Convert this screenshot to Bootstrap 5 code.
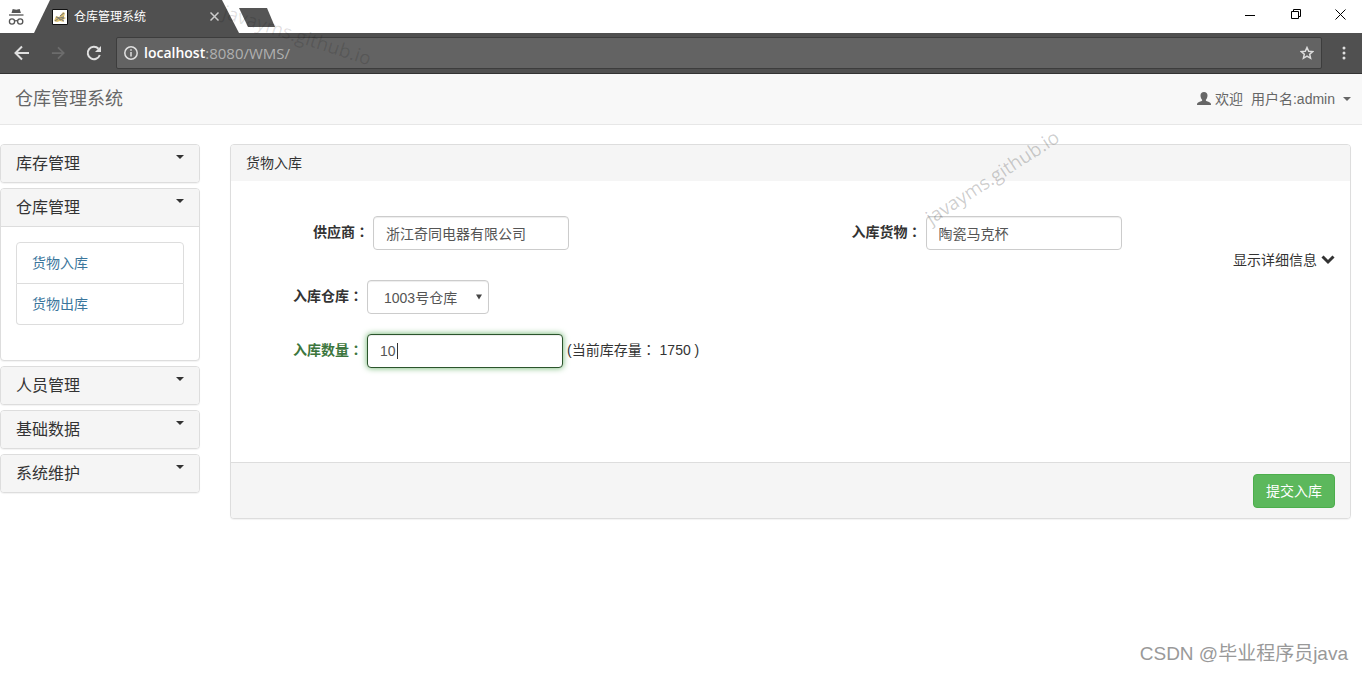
<!DOCTYPE html>
<html lang="zh-CN">
<head>
<meta charset="utf-8">
<meta name="viewport" content="width=device-width, initial-scale=1">
<title>仓库管理系统</title>
<link href="https://cdn.jsdelivr.net/npm/bootstrap@5.3.0/dist/css/bootstrap.min.css" rel="stylesheet">
<style>
body{font:14px/20px "Liberation Sans","Noto Sans CJK SC",sans-serif;color:#333;background:#fff;overflow-x:hidden}
svg{display:block;flex:none}
.colon{font-family:"Noto Sans CJK TC",sans-serif;line-height:1}
/* browser window */
.tabstrip{height:33px;background:#fff}
.chrome-btn{background:none;border:0;padding:0;display:flex;align-items:center;justify-content:center}
.chrome-tab{width:205px;height:33px;background:#505050;color:#fff;font-size:12px;clip-path:polygon(16px 0,188px 0,205px 100%,0 100%);padding:0 20px 0 18px;gap:6px}
.new-tab{width:38px;height:19px;background:#555;clip-path:polygon(0 0,28px 0,36px 100%,9px 100%)}
.win-btn{width:46px;height:28px}
.win-close{width:43px}
.toolbar{height:41px;background:#505050;border-bottom:1px solid #333}
.tools{padding-left:4px;margin-right:4px}
.nav-btn{width:36px;height:36px}
.menu-btn{width:40px;height:36px;padding-left:4px}
.omnibox{height:32px;background:#636363;border:1px solid #3d3d3d;border-radius:2px;padding:0 7px;font:15px/20px "Open Sans","Noto Sans",sans-serif;color:#b0b0b0}
.omnibox input{background:none;border:0;padding:0;outline:0;color:#b0b0b0;min-width:0}
.omnibox label{color:#fff;font-size:14px;font-weight:600;margin-left:6px}
/* application */
.appbar{min-height:51px;background:#f8f8f8;border-bottom:1px solid #e7e7e7;padding:0 11px 0 15px;color:#666}
.appbar a{color:#666;text-decoration:none}
.appbar .brand{font-size:18px}
.caret{width:0;height:0;border-top:4px solid;border-left:4px solid transparent;border-right:4px solid transparent;flex:none}
.page{padding:19px 11px 0 0;gap:30px}
.side{flex:0 0 200px;gap:5px}
.panel{border:1px solid #ddd;border-radius:4px;background:#fff;box-shadow:0 1px 1px rgba(0,0,0,.05);overflow:hidden}
.side-head{background:#f5f5f5;border:0;width:100%;height:37px;padding:0 15px;font-size:16px;color:#333}
.side-head .caret{margin-top:10px}
.side-body{border-top:1px solid #ddd;padding:15px 15px 35px}
.side-body .list-group-item{padding:10px 15px;line-height:20px;color:#3b769c;border-color:#ddd}
.side-body .list-group{--bs-list-group-border-radius:4px}
.main-head{background:#f5f5f5;padding:8px 15px;font-size:14px}
.main-body{padding:35px 15px 94px}
.main-foot{background:#f5f5f5;border-top:1px solid #ddd;padding:11px 15px 10px}
.lbl{font-weight:700;margin:0 4px 3px 0;white-space:nowrap}
.stock{margin:0 0 3px 4px}
.main-body .form-control,.main-body .form-select{height:34px;padding:6px 12px;font-size:14px;line-height:20px;color:#555;border:1px solid #ccc;border-radius:4px;box-shadow:inset 0 1px 1px rgba(0,0,0,.075)}
.main-body .form-control{width:196px}
.main-body .form-select{width:122px;padding:7px 16px 5px;background:#fff url("data:image/svg+xml,%3Csvg xmlns='http://www.w3.org/2000/svg' viewBox='0 0 7 6'%3E%3Cpath d='M0 0h7L3.500 6z' fill='%23444'/%3E%3C/svg%3E") no-repeat right 6px top 13px/6px 6px}
.supplier{padding-left:67px}
.goods{padding-left:61px}
.indent{padding-left:47px}
.store-row{margin-top:10px}
.qty-row{margin-top:20px}
.has-success .lbl{color:#3c763d}
.has-success .form-control{border-color:#2b542c;caret-color:transparent;background:linear-gradient(#333,#333) 29px 8px/1px 16px no-repeat #fff;box-shadow:inset 0 1px 1px rgba(0,0,0,.075),0 0 6px #67b168}
.submit{height:34px;padding:6px 12px;font-size:14px;line-height:20px;color:#fff;background:#5cb85c;border:1px solid #4cae4c;border-radius:4px}
/* stamps laid over the page */
.stamp{position:absolute;pointer-events:none;white-space:nowrap;font:19px/24px "Open Sans","Noto Sans",sans-serif}
.stamp-a{left:915px;top:165px;color:rgba(0,0,0,.2);transform:rotate(-33deg)}
.stamp-b{left:220px;top:23px;color:rgba(0,0,0,.12);transform:rotate(18deg)}
.credit{position:absolute;right:14px;bottom:8px;font:19px/24px "Liberation Sans","Noto Sans CJK SC",sans-serif;color:#999}
</style>
</head>
<body class="position-relative min-vh-100">
<div class="tabstrip d-flex align-items-start">
  <svg width="34" height="32" viewBox="0 0 34 32" fill="none" stroke="#555" stroke-width="1.300"><path d="M9 15h14.500"/><path d="M11.500 13l1.200-4 3.500.8 3.500-.8 1.200 4z" fill="#555" stroke="none"/><circle cx="12" cy="21.500" r="2.600"/><circle cx="20.200" cy="21.500" r="2.600"/><path d="M14.700 21q1.400-.8 2.800 0"/></svg>
  <div class="chrome-tab d-flex align-items-center">
    <svg width="16" height="16" viewBox="0 0 16 16"><path d="M.5.5h15v15H.5z" fill="#fff" stroke="#111"/><path d="M2 12l2-5 3 1 4-5 2 1-1 4 2 1-3 2 1 2-4-1-3 1z" fill="#dcc070"/><path d="M3 12l4-3 1 2 4-2M8 7l4-3M4 8l4 1 4-1M10 11l2 1" fill="none" stroke="#777"/></svg>
    <span class="flex-grow-1">仓库管理系统</span>
    <button class="chrome-btn" type="button" aria-label="关闭标签页"><svg width="9" height="9" viewBox="0 0 9 9" stroke="#ccc" stroke-width="1.500"><path d="M.5.5l8 8M8.500.5l-8 8"/></svg></button>
  </div>
  <button class="chrome-btn new-tab mt-2" type="button" aria-label="新标签页"></button>
  <div class="d-flex ms-auto">
    <button class="chrome-btn win-btn" type="button" aria-label="最小化"><svg width="11" height="11" viewBox="0 0 11 11" stroke="#000"><path d="M0 6.500h10"/></svg></button>
    <button class="chrome-btn win-btn" type="button" aria-label="还原"><svg width="11" height="11" viewBox="0 0 11 11" stroke="#000" fill="none"><path d="M.5 2.500h7v7h-7zM2.500 2.500v-2h7v7h-2"/></svg></button>
    <button class="chrome-btn win-btn win-close" type="button" aria-label="关闭"><svg width="11" height="11" viewBox="0 0 11 11" stroke="#000"><path d="M.5.5l10 10M10.500.5l-10 10"/></svg></button>
  </div>
</div>
<div class="toolbar d-flex align-items-center">
  <div class="tools d-flex">
    <button class="chrome-btn nav-btn" type="button" aria-label="后退"><svg width="16" height="16" viewBox="0 0 16 16" fill="none" stroke="#e0e0e0" stroke-width="2"><path d="M15 8H2M8 1.500L1.500 8 8 14.500"/></svg></button>
    <button class="chrome-btn nav-btn" type="button" aria-label="前进"><svg width="14" height="14" viewBox="0 0 16 16" fill="none" stroke="#6c6c6c" stroke-width="2"><path d="M1 8h13M8 1.500L14.500 8 8 14.500"/></svg></button>
    <button class="chrome-btn nav-btn" type="button" aria-label="刷新"><svg width="16" height="16" viewBox="0 0 16 16" fill="none" stroke="#e0e0e0" stroke-width="2"><path d="M13.800 10A6.200 6.200 0 1 1 12.500 3.700"/><path d="M15 1v6H9z" fill="#e0e0e0" stroke="none"/></svg></button>
  </div>
  <div class="omnibox d-flex align-items-center flex-grow-1">
    <svg width="14" height="14" viewBox="0 0 14 14" fill="none" stroke="#e0e0e0" stroke-width="1.500"><circle cx="7" cy="7" r="6.200"/><path d="M7 6v4.500M7 3.200v1.600"/></svg>
    <label for="addr">localhost</label><input id="addr" class="flex-grow-1" type="text" value=":8080/WMS/">
    <button class="chrome-btn" type="button" aria-label="收藏"><svg width="14" height="14" viewBox="0 0 14 14" fill="none" stroke="#ddd" stroke-width="1.500"><path d="M7 1.500l1.700 3.700 4 .4-3 2.700.9 4L7 10.200l-3.600 2.100.9-4-3-2.700 4-.4z"/></svg></button>
  </div>
  <button class="chrome-btn menu-btn" type="button" aria-label="菜单"><svg width="4" height="14" viewBox="0 0 4 14" fill="#e0e0e0"><circle cx="2" cy="2" r="1.500"/><circle cx="2" cy="7" r="1.500"/><circle cx="2" cy="12" r="1.500"/></svg></button>
</div>

<nav class="appbar d-flex align-items-center justify-content-between">
  <a class="brand" href="#">仓库管理系统</a>
  <a class="d-flex align-items-center" href="#">
    <svg width="14" height="14" viewBox="0 0 14 14" fill="#666"><path d="M7 0c2.200 0 3.500 1.400 3.500 3.600 0 1.900-.8 3.400-1.600 4.200v.9c.8.700 4.300 1.200 4.800 2.500.3.700.3 1.300.3 1.800H0c0-.5 0-1.100.3-1.800.5-1.300 4-1.800 4.800-2.500v-.9c-.8-.8-1.600-2.300-1.600-4.200C3.500 1.400 4.800 0 7 0z"/></svg>
    <span class="ms-1 me-2">欢迎</span><span>用户名:admin</span><span class="caret ms-2"></span>
  </a>
</nav>

<div class="page d-flex align-items-start">
  <aside class="side d-flex flex-column">
    <div class="panel"><button type="button" class="side-head d-flex justify-content-between"><span class="align-self-center">库存管理</span><span class="caret"></span></button></div>
    <div class="panel">
      <button type="button" class="side-head d-flex justify-content-between"><span class="align-self-center">仓库管理</span><span class="caret"></span></button>
      <div class="side-body"><div class="list-group">
        <a class="list-group-item" href="#">货物入库</a>
        <a class="list-group-item" href="#">货物出库</a>
      </div></div>
    </div>
    <div class="panel"><button type="button" class="side-head d-flex justify-content-between"><span class="align-self-center">人员管理</span><span class="caret"></span></button></div>
    <div class="panel"><button type="button" class="side-head d-flex justify-content-between"><span class="align-self-center">基础数据</span><span class="caret"></span></button></div>
    <div class="panel"><button type="button" class="side-head d-flex justify-content-between"><span class="align-self-center">系统维护</span><span class="caret"></span></button></div>
  </aside>
  <main class="panel flex-grow-1">
    <div class="main-head">货物入库</div>
    <form>
      <div class="main-body">
        <div class="row g-0">
          <div class="col-6 supplier d-flex align-items-center"><label class="lbl" for="supplier">供应商<span class="colon" lang="zh-TW">：</span></label><input class="form-control" id="supplier" type="text" value="浙江奇同电器有限公司"></div>
          <div class="col-6 goods d-flex align-items-center"><label class="lbl" for="goods">入库货物<span class="colon" lang="zh-TW">：</span></label><input class="form-control" id="goods" type="text" value="陶瓷马克杯"></div>
        </div>
        <div class="d-flex justify-content-end align-items-center"><span class="me-1">显示详细信息</span><svg width="14" height="14" viewBox="0 0 14 14" fill="none" stroke="#333" stroke-width="3"><path d="M1.500 3.500l5.500 5.500 5.500-5.500"/></svg></div>
        <div class="indent store-row d-flex align-items-center"><label class="lbl" for="store">入库仓库<span class="colon" lang="zh-TW">：</span></label><select class="form-select" id="store"><option>1003号仓库</option></select></div>
        <div class="indent qty-row has-success d-flex align-items-center"><label class="lbl" for="qty">入库数量<span class="colon" lang="zh-TW">：</span></label><input class="form-control" id="qty" type="text" value="10"><span class="stock">(当前库存量<span class="colon" lang="zh-TW">：</span> 1750 )</span></div>
      </div>
      <div class="main-foot d-flex justify-content-end"><button class="submit" type="button">提交入库</button></div>
    </form>
  </main>
</div>
<div class="stamp stamp-a">javayms.github.io</div>
<div class="stamp stamp-b">javayms.github.io</div>
<div class="credit">CSDN @毕业程序员java</div>
</body>
</html>
